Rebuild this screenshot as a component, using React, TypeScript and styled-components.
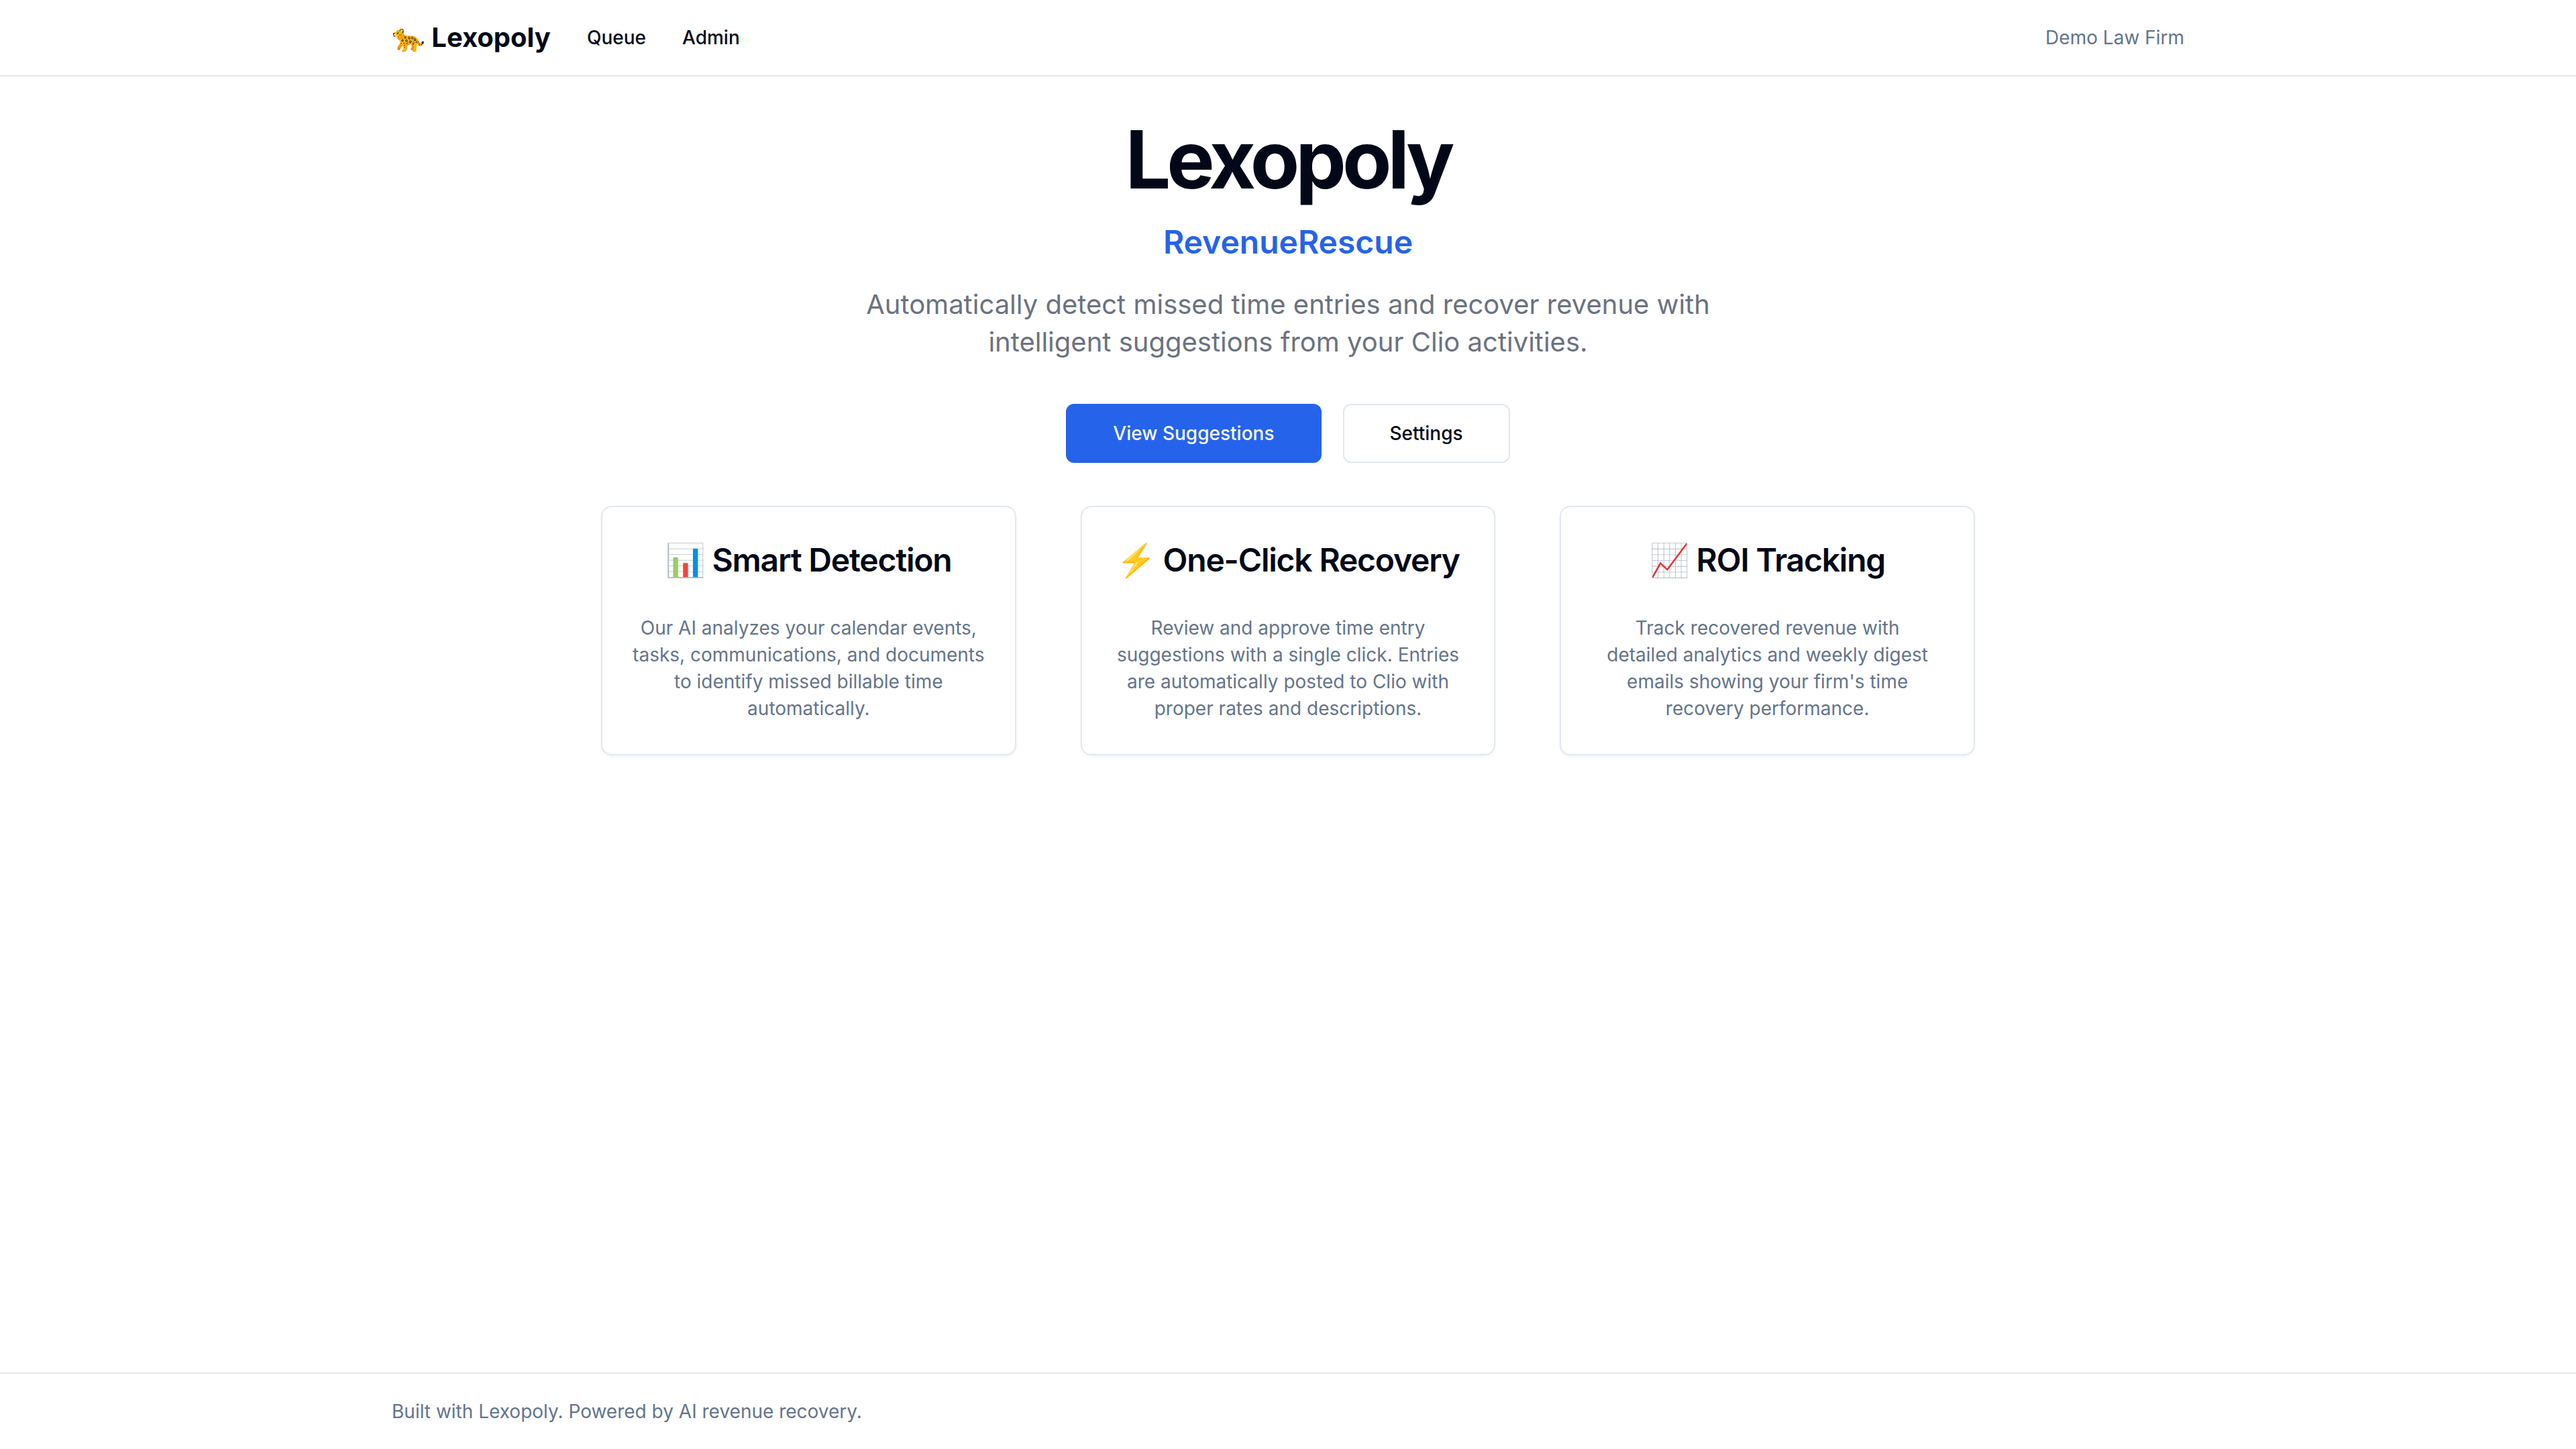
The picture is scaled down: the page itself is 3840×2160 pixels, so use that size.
import React from "react";
import styled, { createGlobalStyle } from "styled-components";

const color = {
  background: "#ffffff",
  foreground: "#020817",
  muted: "#64748b",
  lead: "#6b7280",
  border: "#e2e8f0",
  primary: "#2563eb",
  onPrimary: "#f8fafc",
};

const GlobalStyle = createGlobalStyle`
  *, *::before, *::after {
    box-sizing: border-box;
  }

  body {
    margin: 0;
    background: ${color.background};
    color: ${color.foreground};
    font-family: Inter, "Liberation Sans", "Noto Color Emoji", sans-serif;
    font-size: 28px;
    line-height: 40px;
  }

  h1, h2, h3, p {
    margin: 0;
  }
`;

const Page = styled.div`
  display: flex;
  flex-direction: column;
  min-height: 100vh;
`;

const Container = styled.div`
  display: flex;
  align-items: center;
  width: 100%;
  max-width: 2800px;
  height: 112px;
  margin: 0 auto;
  padding: 0 64px;
`;

const Header = styled.header`
  border-bottom: 2px solid ${color.border};
`;

const Nav = styled.nav`
  display: flex;
  align-items: center;
  gap: 54px;
`;

const NavLink = styled.a`
  color: inherit;
  font-weight: 500;
  text-decoration: none;
`;

const Brand = styled(NavLink)`
  font-size: 40px;
  font-weight: 700;
  line-height: 56px;
`;

const Firm = styled.span`
  margin-left: auto;
  color: ${color.muted};
`;

const Main = styled.main`
  display: flex;
  flex: 1;
  flex-direction: column;
  align-items: center;
  gap: 64px;
  padding: 64px;
  text-align: center;
`;

const Intro = styled.div`
  display: flex;
  flex-direction: column;
  align-items: center;
  gap: 32px;
`;

const Title = styled.h1`
  font-size: 120px;
  font-weight: 700;
  line-height: 120px;
  letter-spacing: -0.05em;
`;

const Product = styled.h2`
  padding-bottom: 2px;
  color: ${color.primary};
  font-size: 48px;
  font-weight: 600;
  line-height: 62px;
`;

const Lead = styled.p`
  max-width: 1344px;
  color: ${color.lead};
  font-size: 40px;
  line-height: 56px;
`;

const Actions = styled.div`
  display: flex;
  gap: 32px;
`;

const Button = styled.button<{ $primary?: boolean }>`
  height: 88px;
  padding: 0 68px;
  border: 2px solid ${(p) => (p.$primary ? color.primary : color.border)};
  border-radius: 12px;
  background: ${(p) => (p.$primary ? color.primary : color.background)};
  color: ${(p) => (p.$primary ? color.onPrimary : color.foreground)};
  font: inherit;
  font-weight: 500;
  cursor: pointer;
`;

const Features = styled.section`
  display: grid;
  grid-template-columns: repeat(3, minmax(0, 1fr));
  gap: 96px;
  width: 100%;
  max-width: 2048px;
`;

const Card = styled.article`
  display: flex;
  flex-direction: column;
  gap: 48px;
  padding: 48px 40px;
  border: 2px solid ${color.border};
  border-radius: 16px;
  background: ${color.background};
  box-shadow: 0 2px 4px rgba(0, 0, 0, 0.05);
`;

const CardTitle = styled.h3`
  padding-bottom: 2px;
  font-size: 48px;
  font-weight: 600;
  line-height: 62px;
  letter-spacing: -0.025em;
`;

const CardText = styled.p`
  color: ${color.muted};
  white-space: pre-line;
`;

const Footer = styled.footer`
  border-top: 2px solid ${color.border};
  color: ${color.muted};
`;

const features = [
  {
    title: "📊 Smart Detection",
    text: "Our AI analyzes your calendar events,\ntasks, communications, and documents\nto identify missed billable time\nautomatically.",
  },
  {
    title: "⚡ One-Click Recovery",
    text: "Review and approve time entry\nsuggestions with a single click. Entries\nare automatically posted to Clio with\nproper rates and descriptions.",
  },
  {
    title: "📈 ROI Tracking",
    text: "Track recovered revenue with\ndetailed analytics and weekly digest\nemails showing your firm's time\nrecovery performance.",
  },
];

export default function App() {
  return (
    <>
      <GlobalStyle />
      <Page>
        <Header>
          <Container>
            <Nav>
              <Brand href="#">🐆 Lexopoly</Brand>
              <NavLink href="#queue">Queue</NavLink>
              <NavLink href="#admin">Admin</NavLink>
            </Nav>
            <Firm>Demo Law Firm</Firm>
          </Container>
        </Header>
        <Main>
          <Intro>
            <Title>Lexopoly</Title>
            <Product>RevenueRescue</Product>
            <Lead>
              Automatically detect missed time entries and recover revenue with
              intelligent suggestions from your Clio activities.
            </Lead>
          </Intro>
          <Actions>
            <Button type="button" $primary>
              View Suggestions
            </Button>
            <Button type="button">Settings</Button>
          </Actions>
          <Features>
            {features.map((feature) => (
              <Card key={feature.title}>
                <CardTitle>{feature.title}</CardTitle>
                <CardText>{feature.text}</CardText>
              </Card>
            ))}
          </Features>
        </Main>
        <Footer>
          <Container>
            <p>Built with Lexopoly. Powered by AI revenue recovery.</p>
          </Container>
        </Footer>
      </Page>
    </>
  );
}
